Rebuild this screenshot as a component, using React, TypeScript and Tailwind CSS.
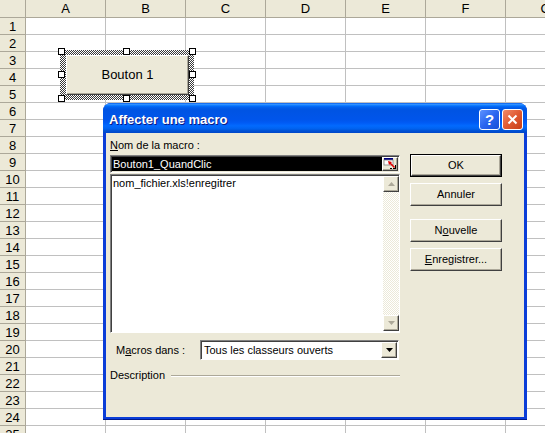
import React from "react";

const cols = ["A", "B", "C", "D", "E", "F", "G"];
const rows = Array.from({ length: 26 }, (_, i) => i + 1);

function Grid() {
  return (
    <div className="flex flex-col">
      <div className="flex h-[18px] shrink-0 bg-[#ECE9D8] border-b border-[#ACA899]">
        <div className="w-[26px] shrink-0 border-r border-[#ACA899]" />
        {cols.map((c) => (
          <div
            key={c}
            className="w-[80px] shrink-0 border-r border-[#ACA899] flex items-center justify-center text-[13px] leading-none text-black"
          >
            {c}
          </div>
        ))}
      </div>
      {rows.map((r) => (
        <div key={r} className="flex h-[17px] shrink-0">
          <div className="w-[26px] shrink-0 bg-[#ECE9D8] border-r border-b border-[#ACA899] flex items-center justify-center text-[13px] leading-none text-black">
            {r}
          </div>
          {cols.map((c) => (
            <div key={c} className="w-[80px] shrink-0 border-r border-b border-[#C0C0C0]" />
          ))}
        </div>
      ))}
    </div>
  );
}

function Handle({ pos }: { pos: string }) {
  return <div className={`absolute w-[7px] h-[7px] bg-white border border-black ${pos}`} />;
}

function SheetButton() {
  return (
    <div className="absolute left-[58px] top-[48px] w-[138px] h-[54px]">
      <div className="absolute inset-[2px] bg-[image:repeating-conic-gradient(#3a3a3a_0%_25%,#ffffff_0%_50%)] bg-[length:2px_2px]" />
      <div className="absolute left-[8px] top-[7px] right-[7px] bottom-[7px] bg-[#ECE9D8] border border-t-white border-l-white border-r-[#404040] border-b-[#404040] shadow-[inset_-1px_-1px_0_#ACA899] flex items-center justify-center text-[13px] text-black">
        Bouton 1
      </div>
      <Handle pos="left-0 top-0" />
      <Handle pos="left-[65px] top-0" />
      <Handle pos="left-[131px] top-0" />
      <Handle pos="left-0 top-[23px]" />
      <Handle pos="left-[131px] top-[23px]" />
      <Handle pos="left-0 top-[47px]" />
      <Handle pos="left-[65px] top-[47px]" />
      <Handle pos="left-[131px] top-[47px]" />
    </div>
  );
}

const raised =
  "bg-[#ECE9D8] border border-t-white border-l-white border-r-[#404040] border-b-[#404040] shadow-[inset_-1px_-1px_0_#ACA899]";
const sunken =
  "border border-t-[#808080] border-l-[#808080] border-r-white border-b-white shadow-[inset_1px_1px_0_#404040]";

function DlgButton({ children, def }: { children: React.ReactNode; def?: boolean }) {
  if (def) {
    return (
      <div className="w-[92px] h-[23px] border border-black">
        <div className={`w-full h-full ${raised} flex items-center justify-center text-[11px] text-black`}>
          {children}
        </div>
      </div>
    );
  }
  return (
    <div className={`w-[92px] h-[23px] ${raised} flex items-center justify-center text-[11px] text-black`}>
      {children}
    </div>
  );
}

function Arrow({ dir, disabled }: { dir: "up" | "down"; disabled?: boolean }) {
  const fill = disabled ? "#ACA899" : "#000000";
  return (
    <svg width="7" height="4" viewBox="0 0 7 4">
      {dir === "up" ? (
        <polygon points="3.5,0 7,4 0,4" fill={fill} />
      ) : (
        <polygon points="0,0 7,0 3.5,4" fill={fill} />
      )}
    </svg>
  );
}

function RefIcon() {
  return (
    <svg width="14" height="14" viewBox="0 0 14 14">
      <rect x="1" y="1" width="9" height="2" fill="#000080" />
      <rect x="1" y="3" width="9" height="5" fill="#ffffff" stroke="#808080" strokeWidth="0.8" />
      <line x1="11.5" y1="10.5" x2="6.5" y2="5.5" stroke="#E00000" strokeWidth="1.6" />
      <polygon points="5,4 9,5 6,8" fill="#E00000" />
      <rect x="7" y="11" width="2" height="1" fill="#000" />
      <rect x="10" y="11" width="3" height="1" fill="#000" />
      <rect x="12" y="8" width="1" height="3" fill="#000" />
    </svg>
  );
}

function Dialog() {
  return (
    <div className="absolute left-[103px] top-[103px] w-[424px] h-[317px] flex flex-col rounded-t-[8px] overflow-hidden bg-[#0A3DD8] shadow-[inset_0_-1px_0_#001A8C]">
      <div className="h-[30px] shrink-0 flex items-center pl-[6px] pr-[4px] pt-[3px] bg-[linear-gradient(180deg,#0058EE_0%,#3593FF_4%,#288EFF_6%,#127DFF_8%,#036FFC_10%,#0262EE_14%,#0057E5_20%,#0054E3_24%,#0055EB_56%,#005BF5_66%,#026AFE_76%,#0062EF_86%,#0052D6_92%,#0046C8_100%)]">
        <span className="text-white font-bold text-[13px] leading-none [text-shadow:1px_1px_0_#0a1883]">
          Affecter une macro
        </span>
        <div className="ml-auto flex gap-[2px]">
          <div className="w-[21px] h-[21px] rounded-[3px] border border-white bg-[linear-gradient(135deg,#5C92FF_0%,#2B66F0_50%,#1A4FD8_100%)] flex items-center justify-center text-white font-bold text-[15px] leading-none">
            ?
          </div>
          <div className="w-[21px] h-[21px] rounded-[3px] border border-white bg-[linear-gradient(135deg,#F08A68_0%,#E05A32_50%,#C63E18_100%)] flex items-center justify-center">
            <svg width="11" height="11" viewBox="0 0 11 11">
              <line x1="1.5" y1="1.5" x2="9.5" y2="9.5" stroke="white" strokeWidth="2" />
              <line x1="9.5" y1="1.5" x2="1.5" y2="9.5" stroke="white" strokeWidth="2" />
            </svg>
          </div>
        </div>
      </div>
      <div className="flex-1 mx-[3px] mb-[3px] bg-[#ECE9D8] flex items-start pl-[4px] pt-[6px] text-[11px] text-black">
        <div className="w-[290px] shrink-0 flex flex-col">
          <div className="h-[13px] leading-[13px]">
            <span className="underline underline-offset-[1px]">N</span>om de la macro :
          </div>
          <div className={`mt-[3px] h-[18px] ${sunken} flex p-[1px] pl-[1px]`}>
            <div className="flex-1 bg-black text-white leading-[14px] pl-[1px]">Bouton1_QuandClic</div>
            <div className={`w-[16px] ${raised} flex items-center justify-center`}>
              <RefIcon />
            </div>
          </div>
          <div className={`mt-[1px] h-[159px] ${sunken} flex bg-white pt-[1px] pl-[1px]`}>
            <div className="flex-1 leading-[13px] pl-[1px] pt-[1px]">nom_fichier.xls!enregitrer</div>
            <div className="w-[16px] flex flex-col mb-[1px]">
              <div className={`h-[16px] shrink-0 ${raised} flex items-center justify-center`}>
                <Arrow dir="up" disabled />
              </div>
              <div className="flex-1 bg-[image:repeating-conic-gradient(#ECE9D8_0%_25%,#ffffff_0%_50%)] bg-[length:2px_2px]" />
              <div className={`h-[16px] shrink-0 ${raised} flex items-center justify-center`}>
                <Arrow dir="down" disabled />
              </div>
            </div>
          </div>
          <div className="mt-[7px] h-[20px] flex items-center">
            <div className="pl-[6px]">
              M<span className="underline underline-offset-[1px]">a</span>cros dans :
            </div>
            <div className={`ml-auto mr-[1px] w-[199px] h-[20px] ${sunken} bg-white flex p-[1px]`}>
              <div className="flex-1 pl-[2px] leading-[16px]">Tous les classeurs ouverts</div>
              <div className={`w-[16px] ${raised} flex items-center justify-center`}>
                <Arrow dir="down" />
              </div>
            </div>
          </div>
          <div className="mt-[9px] flex items-center h-[13px]">
            <span className="leading-[13px]">Description</span>
            <div className="flex-1 ml-[6px] h-[2px] border-t border-t-[#ACA899] border-b border-b-white" />
          </div>
        </div>
        <div className="ml-[10px] mt-[15px] w-[92px] flex flex-col">
          <DlgButton def>OK</DlgButton>
          <div className="mt-[6px]">
            <DlgButton>Annuler</DlgButton>
          </div>
          <div className="mt-[13px]">
            <DlgButton>
              N<span className="underline underline-offset-[1px]">o</span>uvelle
            </DlgButton>
          </div>
          <div className="mt-[6px]">
            <DlgButton>
              <span className="underline underline-offset-[1px]">E</span>nregistrer...
            </DlgButton>
          </div>
        </div>
      </div>
    </div>
  );
}

export default function App() {
  return (
    <div className="relative w-[545px] h-[433px] overflow-hidden bg-white font-['Liberation_Sans',Arial,sans-serif]">
      <Grid />
      <SheetButton />
      <Dialog />
    </div>
  );
}
